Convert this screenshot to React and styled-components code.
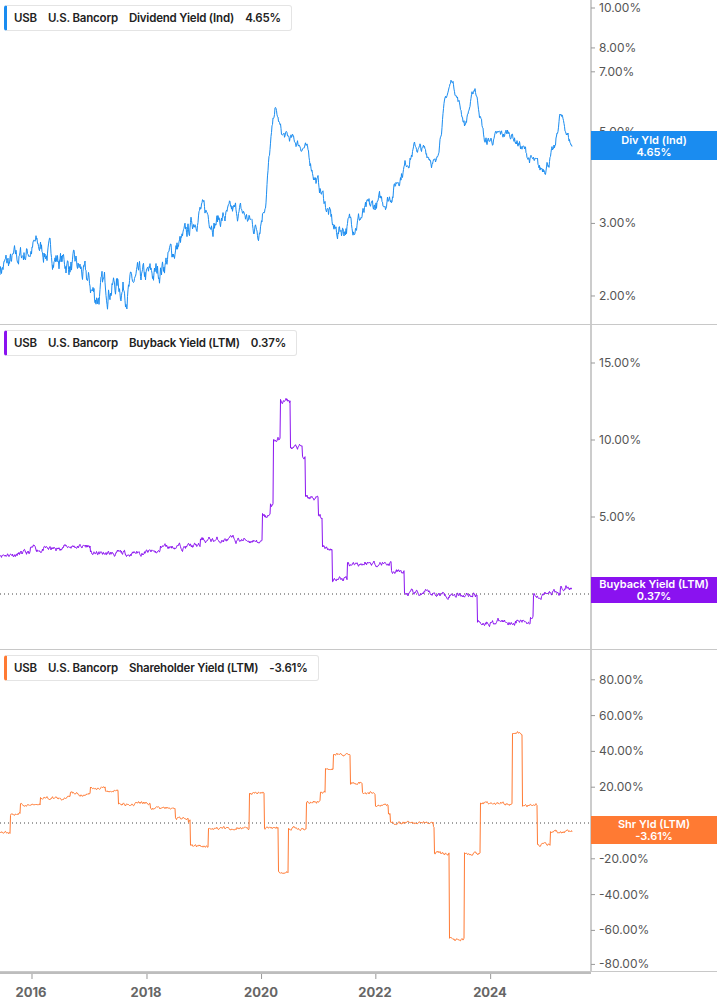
import React from 'react'
import styled, { createGlobalStyle } from 'styled-components'

const Global = createGlobalStyle`
  body { margin: 0; background: #fff; font-family: Inter, "Noto Sans", sans-serif; }
`

const PLOT_W = 591
const AXIS_W = 126

const Page = styled.div`
  width: 717px;
  display: flex;
  flex-direction: column;
`

const Panel = styled.div`
  position: relative;
  height: ${p => p.h}px;
  border-bottom: 1px solid #c8c8c8;
  box-sizing: border-box;
`

const Legend = styled.div`
  position: absolute;
  left: 4px;
  top: 5px;
  display: flex;
  align-items: center;
  gap: 11px;
  height: 24px;
  padding: 0 10px 0 7px;
  background: #fff;
  border: 1px solid #e4e4e4;
  border-left: 3px solid ${p => p.color};
  border-radius: 3px;
  font-size: 11.5px;
  font-weight: 600;
  letter-spacing: -0.2px;
  color: #222;
  white-space: nowrap;
`

const Badge = styled.div`
  position: absolute;
  left: ${PLOT_W}px;
  top: ${p => p.top}px;
  width: ${AXIS_W}px;
  height: ${p => p.h}px;
  background: ${p => p.color};
  color: #fff;
  font-size: 11px;
  font-weight: 600;
  line-height: 12px;
  display: flex;
  flex-direction: column;
  align-items: center;
  justify-content: center;
`

const XAxis = styled.div`
  position: relative;
  height: 33px;
  width: ${PLOT_W}px;
  border-top: 2px solid #bdbdbd;
  box-sizing: border-box;
`

const Year = styled.span`
  position: absolute;
  top: 10px;
  transform: translateX(-50%);
  font-size: 13px;
  font-weight: 700;
  color: #666;
  &::before {
    content: '';
    position: absolute;
    left: 50%;
    top: -10px;
    width: 1px;
    height: 5px;
    background: #999;
  }
`

function rng(seed) {
  let s = seed
  return () => {
    s = (s * 16807) % 2147483647
    return (s - 1) / 2147483646
  }
}

function series(keys, noise, seed, step) {
  const r = rng(seed)
  const pts = []
  let k = 0
  let drift = 0
  for (let x = keys[0][0]; x <= keys[keys.length - 1][0]; x += 0.5) {
    while (k < keys.length - 2 && x > keys[k + 1][0]) k++
    const [x0, v0] = keys[k]
    const [x1, v1] = keys[k + 1]
    let v = step ? v0 : v0 + (v1 - v0) * ((x - x0) / (x1 - x0 || 1))
    drift = drift * 0.8 + (r() - 0.5) * noise
    pts.push([x, v + drift])
  }
  return pts
}

const divKeys = [[0,2.35],[12,2.4],[35,2.65],[60,2.45],[80,2.3],[95,2.0],[110,2.15],[130,2.1],[155,2.25],[175,2.6],[185,2.75],[200,3.25],[215,3.05],[240,3.2],[258,2.9],[266,3.5],[270,4.5],[275,5.7],[282,4.9],[290,4.8],[305,4.6],[315,3.9],[335,2.85],[360,3.1],[390,3.5],[415,4.6],[430,4.4],[436,4.1],[445,5.9],[452,6.7],[465,5.2],[475,6.4],[485,4.7],[510,5.0],[530,4.3],[540,4.0],[555,4.5],[560,5.5],[572,4.6]]
const bbKeys = [[0,2.6],[30,2.9],[60,3.1],[90,2.6],[130,2.7],[160,3.1],[200,3.5],[230,3.5],[258,3.3],[262,5],[270,5.8],[273,10],[280,12.5],[290,9.5],[302,8.8],[305,6.2],[318,5],[322,3],[332,1],[346,1],[347,2],[390,2],[391,1.4],[403,1.4],[404,0],[475,0],[477,-1.8],[530,-1.4],[533,0],[560,0.4],[572,0.37]]
const shKeys = [[0,-5],[10,5],[20,10],[40,14],[70,16],[90,20],[105,18],[118,11],[150,8],[175,3],[188,1],[190,-13],[206,-13],[208,-3],[248,-3],[249,17],[262,17],[264,-3],[276,-3],[278,-27],[286,-27],[288,-3],[305,-3],[306,12],[320,17],[325,30],[333,38],[348,38],[350,22],[362,17],[375,10],[388,5],[390,0],[433,-2],[434,-17],[447,-17],[449,-65],[462,-65],[464,-17],[478,-17],[480,11],[510,11],[512,50],[520,50],[522,10],[535,10],[537,-12],[548,-12],[550,-5],[572,-3.6]]

function path(pts, yOf) {
  return pts.map((p, i) => (i ? 'L' : 'M') + p[0].toFixed(1) + ' ' + yOf(p[1]).toFixed(1)).join('')
}

function Chart({ h, color, pts, yOf, ticks, zero }) {
  return (
    <svg width="717" height={h} style={{ display: 'block' }}>
      <line x1={PLOT_W} y1="0" x2={PLOT_W} y2={h} stroke="#999" />
      {zero !== undefined && <line x1="0" y1={zero} x2={PLOT_W} y2={zero} stroke="#444" strokeDasharray="1 3" />}
      {ticks.map(([v, label]) => (
        <g key={label}>
          <line x1={PLOT_W} x2={PLOT_W + 4} y1={yOf(v)} y2={yOf(v)} stroke="#999" />
          <text x={PLOT_W + 8} y={yOf(v) + 4} fontSize="12" fill="#555" fontFamily="Inter, sans-serif">{label}</text>
        </g>
      ))}
      <path d={path(pts, yOf)} fill="none" stroke={color} strokeWidth="1" />
    </svg>
  )
}

const divY = v => 8 + Math.log10(10 / v) * 412
const bbY = v => 269 - v * 15.4
const shY = v => 173 - v * 1.79

export default function App() {
  const blue = '#1a8cf0', purple = '#8a12f0', orange = '#ff7a33'
  return (
    <Page>
      <Global />
      <Panel h={325}>
        <Chart h={324} color={blue} pts={series(divKeys, 0.2, 7)} yOf={divY}
          ticks={[[10,'10.00%'],[8,'8.00%'],[7,'7.00%'],[5,'5.00%'],[3,'3.00%'],[2,'2.00%']]} />
        <Legend color={blue}><span>USB</span><span>U.S. Bancorp</span><span>Dividend Yield (Ind)</span><span>4.65%</span></Legend>
        <Badge color={blue} top={131} h={29}><span>Div Yld (Ind)</span><span>4.65%</span></Badge>
      </Panel>
      <Panel h={325}>
        <Chart h={324} color={purple} pts={series(bbKeys, 0.25, 11, true)} yOf={bbY} zero={bbY(0)}
          ticks={[[15,'15.00%'],[10,'10.00%'],[5,'5.00%'],[0,'0.00%']]} />
        <Legend color={purple}><span>USB</span><span>U.S. Bancorp</span><span>Buyback Yield (LTM)</span><span>0.37%</span></Legend>
        <Badge color={purple} top={252} h={26}><span>Buyback Yield (LTM)</span><span>0.37%</span></Badge>
      </Panel>
      <Panel h={322}>
        <Chart h={321} color={orange} pts={series(shKeys, 1.2, 5, true)} yOf={shY} zero={shY(0)}
          ticks={[80,60,40,20,0,-20,-40,-60].map(v => [v, v.toFixed(2) + '%']).concat([[-79, '-80.00%']])} />
        <Legend color={orange}><span>USB</span><span>U.S. Bancorp</span><span>Shareholder Yield (LTM)</span><span>-3.61%</span></Legend>
        <Badge color={orange} top={166} h={28}><span>Shr Yld (LTM)</span><span>-3.61%</span></Badge>
      </Panel>
      <XAxis>
        {[[31,'2016'],[146,'2018'],[261,'2020'],[375,'2022'],[490,'2024']].map(([x, t]) => (
          <Year key={t} style={{ left: x }}>{t}</Year>
        ))}
      </XAxis>
    </Page>
  )
}
